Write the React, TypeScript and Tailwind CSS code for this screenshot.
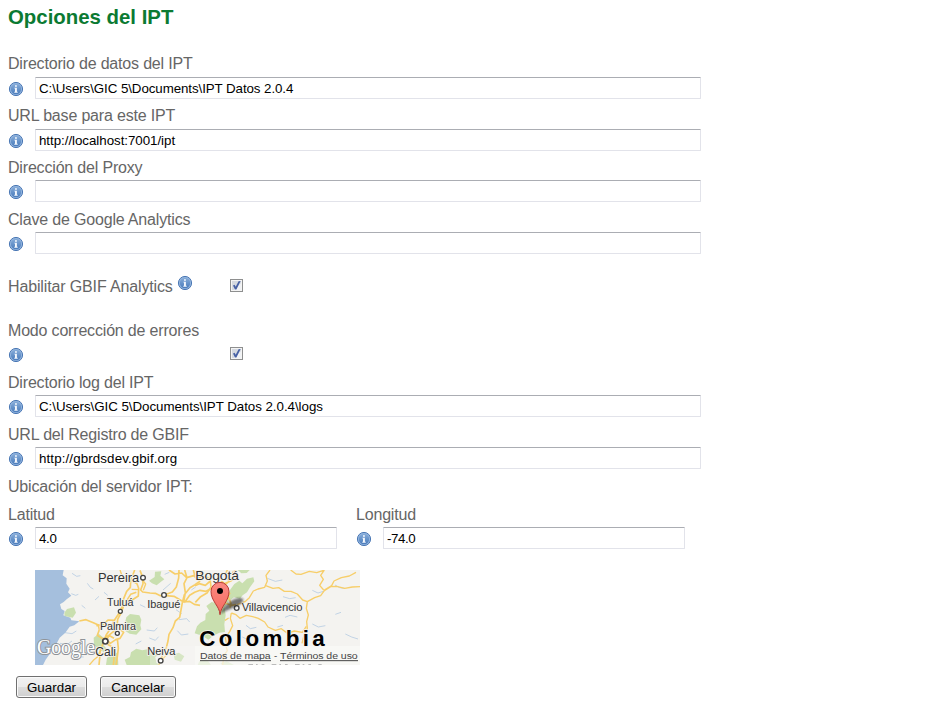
import { useId } from 'react';

function InfoIcon() {
  const id = useId();
  return (
    <svg className="block h-4 w-4 shrink-0" viewBox="0 0 16 16" aria-hidden="true">
      <defs>
        <linearGradient id={id} x1="0" y1="0" x2="0" y2="1">
          <stop offset="0" stopColor="#86acd9" />
          <stop offset="1" stopColor="#4a7cbc" />
        </linearGradient>
      </defs>
      <circle cx="8" cy="8" r="6.6" fill="#93b5de" stroke="#4b78b5" strokeWidth="1" />
      <circle cx="8" cy="8" r="5.2" fill={`url(#${id})`} />
      <path d="M7 4.2h1.9v1.5H7zM6.4 6.7h2.5v4h.8v1H6.3v-1H7V7.5h-.6z" fill="#f4f8fd" />
    </svg>
  );
}

function TextInput({ value, label, size, tracking }: { value: string; label: string; size: string; tracking: string }) {
  return (
    <input
      aria-label={label}
      defaultValue={value}
      className={`${size} ${tracking} block h-[22px] rounded-[1px] border border-[#e2e3ea] border-t-[#abadb3] bg-white px-[3px] py-0 text-[13.33px] text-black outline-none`}
    />
  );
}

type FieldProps = { label: string; value: string; lift?: string; size?: string; tracking?: string };

function Field({ label, value, lift = '', size = 'w-[666px]', tracking = 'tracking-normal' }: FieldProps) {
  return (
    <div className="h-[52px]">
      <div className="h-[26px] leading-[26px]">{label}</div>
      <div className={`flex ${lift}`}>
        <span className="mr-[11px] pt-1"><InfoIcon /></span>
        <TextInput value={value} label={label} size={size} tracking={tracking} />
      </div>
    </div>
  );
}

function Check() {
  return (
    <svg className="block h-[13px] w-[13px]" viewBox="0 0 13 13" role="checkbox" aria-checked="true">
      <rect x=".5" y=".5" width="12" height="12" fill="#f4f4f4" stroke="#8e8f8f" />
      <rect x="2" y="2" width="9" height="9" fill="#d5d9e0" />
      <path d="M11 4V11H4Z" fill="#f0f2f5" />
      <path d="M3 6.5 4.6 5.7 5.7 7.7 8.6 2.2 10.6 2 6.4 10.4 5 10.4Z" fill="#4660a5" />
    </svg>
  );
}

function ServerMap() {
  return (
    <svg className="block h-[95px] w-[325px]" viewBox="0 0 975 285" fontFamily="Liberation Sans, Arial, sans-serif">
      <defs>
        <linearGradient id="pin" x1="0" y1="0" x2="0" y2="1">
          <stop offset="0" stopColor="#fb8a82" />
          <stop offset="1" stopColor="#f56a5f" />
        </linearGradient>
        <filter id="soft"><feGaussianBlur stdDeviation="3" /></filter>
      </defs>
      <rect width="975" height="285" fill="#f4f3f0" />
      <g transform="translate(-15 -15)">
        <path d="M15 15H101L98 31 110 40 109 56 119 71 114 82 124 92 110 103 101 111 90 118 94 132 104 138 100 151 121 158 124 166 148 169 133 181 119 185 106 203 89 218 78 239 65 257 57 270 47 284 39 300H15Z" fill="#a5bfdd" />
        <g fill="#c9dfaf">
          <path d="M357 47 374 36 375 20 394 19 391 32 403 43 391 52 380 61 366 55Z" />
          <path d="M111 132 132 127 138 143 128 158 104 153 103 143Z" />
          <path d="M289 157 300 147 328 151 334 164 331 181 334 193 319 209 299 206 286 198 296 181 285 173Z" />
          <path d="M191 218 206 206 221 218 218 238 230 251 222 262 206 252 192 240Z" />
          <path d="M231 278 246 270 263 262 265 300H228Z" />
          <path d="M284 284 300 276 303 262 319 251 337 256 356 252 366 263 380 258 386 270 376 276 379 293 390 300H290Z" />
          <path d="M431 267 447 263 463 274 453 290 434 284Z" />
          <path d="M613 57 628 47 637 55 651 41 670 37 673 49 660 67 651 82 638 91 630 101 612 97 596 108 584 127 587 151 583 178 585 201 568 203 550 212 535 224 518 213 494 205 501 184 511 173 526 165 527 147 538 137 529 123 545 111 560 115 574 102 595 94 600 75Z" />
          <path d="M508 289 530 282 543 300H503Z" /><path d="M571 294 591 289 612 300H576Z" />
          <path d="M623 15H659L650 24 634 25Z" />
        </g>
        <g fill="none" stroke="#a8c2e0" strokeWidth="2">
          <path d="M126 25 140 34 151 32M172 55 181 67 190 72M124 86 137 91 145 88M195 105 207 94M155 121 166 130M105 203 126 206 139 198M90 235 112 238 126 228M143 232 158 237M69 257 92 261 102 253M130 266 142 275 161 276M174 247 184 260M350 195 373 198 382 188M358 219 376 226 386 215M317 237 334 228M447 164 470 161 479 171M442 197 454 210 475 207M399 75 422 55M438 134 455 146M484 75 497 66M330 119 346 127M404 28 418 22M222 82 233 91M712 40 736 49 757 45M759 95 779 101 797 98M847 76 864 84 880 79M915 60 929 68 944 70M648 181 661 191 679 187M765 157 780 151 802 156M847 177 865 186 886 182M916 148 933 142M946 207 965 216 984 222M637 216 654 224M847 225 865 229M742 186 759 181" />
        </g>
        <g fill="none" stroke="#f7ce69" strokeWidth="5" strokeLinejoin="round">
          <path d="M314 15 307 34 302 50 301 67 290 79 281 101 276 126 265 148 251 169 242 190 229 209 221 230 211 258 207 300M307 48 321 56 326 70 325 93 311 102 294 113 282 120 274 142 263 163 261 184 251 199 239 209 226 231M330 16 338 37 339 56 332 75 338 81 360 84 376 85 391 92 403 90 427 81 439 66 446 39 447 15M148 168 168 164 190 173 205 180 208 194 202 211 219 222 236 211 252 220M199 182 220 178 234 165 256 166M232 226 241 235 257 224 270 220 281 202 266 189M233 238 250 248 253 271 250 300M262 220 265 250 262 275 258 300M286 113 302 88 319 82M457 113 463 89 480 68 495 59 511 48M463 113 479 91 494 82 510 76 528 79 545 70M401 91 432 94 461 111 479 109 493 118 510 121M457 113 453 135 449 157 436 168 429 188 417 208 414 228 409 248 400 260 392 288 386 300M417 15 435 27 455 24 470 38 491 32 510 49M461 111 466 83 462 56 471 38 464 15M490 15 494 29 510 38 528 35 541 45" />
          <path d="M495 62 508 56 526 61 541 48 543 66 532 83 512 95 496 112M508 16 514 31 532 42 548 35M592 15 585 31 598 48 587 58 573 48M586 55 604 47 619 36 608 22 619 15M600 83 594 94 603 115 600 128M560 75 575 96 585 114 604 121 618 119" />
          <path d="M720 15 708 31 712 48 704 67 684 72 670 78 658 98 645 110 621 119M707 62 729 70 746 68 763 79 783 79 802 87 818 105 832 110 829 130 835 150 830 170 832 190 822 211 816 235M832 110 854 98 872 92 883 77 902 65 920 64 944 70 967 66 990 65M883 75 905 62 912 48 934 38 958 33 978 22M883 15 872 31 880 43 869 61 881 75M782 15 798 27 813 28 838 19 860 23 881 16" strokeWidth="4" />
          <path d="M604 144 601 160 608 182 599 200 586 218 590 238M604 144 618 149 630 160 649 151 668 155 685 160 704 171 714 186 736 196 754 191 772 205 793 198 817 202 829 184M585 166 596 159M586 237 592 257 582 271 578 300" strokeWidth="4" />
          <path d="M270 15 275 29 286 42 300 49M178 300 190 286 202 276 212 254M305 73 326 74M332 39 347 57 340 76M392 289 410 269 427 259" strokeWidth="4" />
        </g>
      </g>
      <rect x="480" y="228" width="495" height="57" fill="#faf9f7" fillOpacity=".7" />
      <rect x="345" y="228" width="135" height="57" fill="#faf9f7" fillOpacity=".3" />
      <g stroke="#444" strokeWidth="4" fill="#fff">
        <circle cx="324" cy="23" r="7" /><circle cx="387" cy="75" r="7" /><circle cx="256" cy="124" r="6" />
        <circle cx="247" cy="190" r="6" /><circle cx="211" cy="214" r="8" strokeWidth="5" /><circle cx="377" cy="272" r="7" /><circle cx="605" cy="114" r="7" />
      </g>
      <text x="6" y="253" fontFamily="Liberation Serif, Times New Roman, serif" fontSize="64" fill="#fff" stroke="#8f9398" strokeWidth="6" paintOrder="stroke" textLength="174" lengthAdjust="spacingAndGlyphs">Google</text>
      <g fill="#333" stroke="#f4f3f0" strokeWidth="5" paintOrder="stroke" strokeLinejoin="round">
        <text x="189" y="36" fontSize="37" textLength="123" lengthAdjust="spacingAndGlyphs">Pereira</text>
        <text x="216" y="107" fontSize="32" textLength="79" lengthAdjust="spacingAndGlyphs">Tuluá</text>
        <text x="337" y="113" fontSize="32" textLength="99" lengthAdjust="spacingAndGlyphs">Ibagué</text>
        <text x="195" y="179" fontSize="32" textLength="108" lengthAdjust="spacingAndGlyphs">Palmira</text>
        <text x="181" y="259" fontSize="37" textLength="62" lengthAdjust="spacingAndGlyphs">Cali</text>
        <text x="337" y="256" fontSize="32" textLength="84" lengthAdjust="spacingAndGlyphs">Neiva</text>
        <text x="481" y="31" fontSize="37" textLength="131" lengthAdjust="spacingAndGlyphs">Bogotá</text>
        <text x="620" y="124" fontSize="31" textLength="182" lengthAdjust="spacingAndGlyphs">Villavicencio</text>
        <text x="493" y="228" fontSize="67" fontWeight="bold" fill="#000" textLength="376">Colombia</text>
      </g>
      <path d="M556 132C562 113 575 97 601 86 620 80 632 86 620 98 604 114 576 117 556 132Z" fill="#222" fillOpacity=".6" filter="url(#soft)" />
      <path d="M555 134C554 108 528 94 528 64A27 27 0 0 1 582 64C582 94 558 108 555 134Z" fill="url(#pin)" stroke="#b63b34" strokeWidth="3" />
      <circle cx="555" cy="63" r="9" fill="#000" />
      <g fontSize="29" fill="#444">
        <text x="495" y="267" textLength="212" lengthAdjust="spacingAndGlyphs">Datos de mapa</text>
        <text x="717" y="267">-</text>
        <text x="735" y="267" textLength="233" lengthAdjust="spacingAndGlyphs">Términos de uso</text>
        <path d="M495 272H708M735 272H969" stroke="#444" strokeWidth="3" />
      </g>
      <path d="M640 283.5H860" stroke="#bbb" strokeWidth="3" strokeDasharray="14 9 5 12 8 22" />
    </svg>
  );
}

function Button({ label, size }: { label: string; size: string }) {
  return (
    <button className={`${size} h-[22px] rounded-[3px] border border-[#707070] bg-[linear-gradient(#f2f2f2_0%,#ebebeb_50%,#dddddd_50%,#cfcfcf_100%)] text-[13.33px] leading-[22px] tracking-[0.04px] text-black shadow-[inset_0_0_0_1px_#fafafa]`}>
      {label}
    </button>
  );
}

export default function App() {
  return (
    <main className="h-[704px] w-[949px] overflow-hidden bg-white pl-2 font-['Liberation_Sans',Arial,sans-serif] text-base tracking-[-0.18px] text-[#666]">
      <h1 className="h-[51px] pt-1 text-[20.4px] font-bold leading-[26px] tracking-normal text-[#0b7a32]">Opciones del IPT</h1>
      <Field label="Directorio de datos del IPT" value="C:\Users\GIC 5\Documents\IPT Datos 2.0.4" tracking="tracking-[-0.08px]" />
      <Field label="URL base para este IPT" value="http://localhost:7001/ipt" tracking="tracking-[-0.04px]" />
      <Field label="Dirección del Proxy" value="" lift="-mt-px" />
      <Field label="Clave de Google Analytics" value="" lift="-mt-px" />
      <div className="flex h-[59px] pt-[15px]">
        <span className="w-[169px] leading-[26px] tracking-[-0.14px]">Habilitar GBIF Analytics</span>
        <span className="w-[53px] pt-px"><InfoIcon /></span>
        <span className="pt-[5px]"><Check /></span>
      </div>
      <div className="h-[52px]">
        <div className="h-[26px] leading-[26px]">Modo corrección de errores</div>
        <div className="flex">
          <span className="w-[222px] pt-[3px]"><InfoIcon /></span>
          <span className="pt-[3px]"><Check /></span>
        </div>
      </div>
      <Field label="Directorio log del IPT" value="C:\Users\GIC 5\Documents\IPT Datos 2.0.4\logs" lift="-mt-px" tracking="tracking-[-0.04px]" />
      <Field label="URL del Registro de GBIF" value="http://gbrdsdev.gbif.org" lift="-mt-px" tracking="tracking-[0.12px]" />
      <div className="h-7 leading-[26px]">Ubicación del servidor IPT:</div>
      <div className="flex h-[68px]">
        <div className="w-[348px]"><Field label="Latitud" value="4.0" lift="-mt-px" size="w-[302px]" tracking="tracking-[-0.3px]" /></div>
        <Field label="Longitud" value="-74.0" lift="-mt-px" size="w-[302px]" tracking="tracking-[-0.4px]" />
      </div>
      <div className="h-[106px] pl-[27px]"><ServerMap /></div>
      <div className="flex gap-[13px] pl-2">
        <Button label="Guardar" size="w-[71px]" />
        <Button label="Cancelar" size="w-[76px]" />
      </div>
    </main>
  );
}
